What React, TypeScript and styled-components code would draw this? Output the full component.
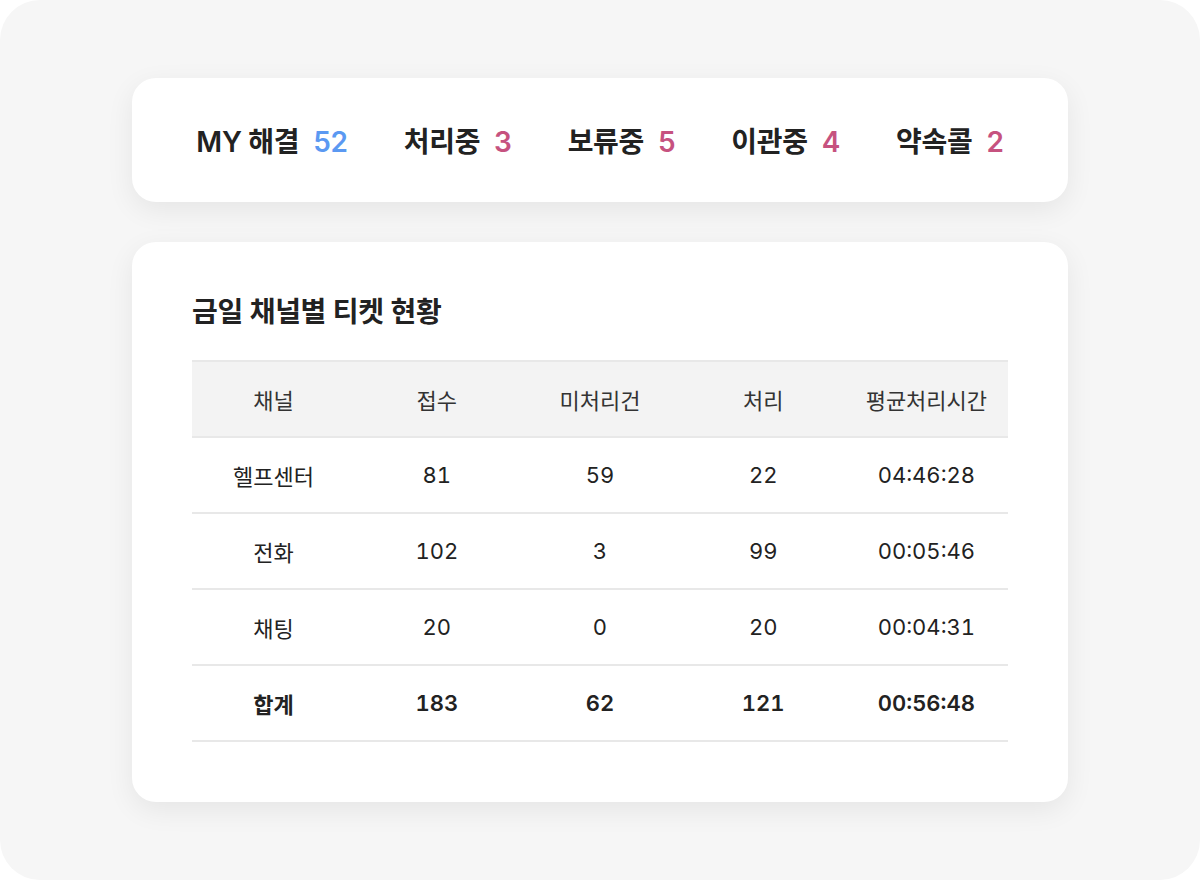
import React from 'react';
import styled, { createGlobalStyle } from 'styled-components';

const GlobalStyle = createGlobalStyle`
  html, body {
    margin: 0;
    padding: 0;
    background: #ffffff;
  }
  body {
    font-family: Inter, 'Noto Sans CJK KR', sans-serif;
    color: #222222;
  }
`;

const Screen = styled.div`
  width: 1200px;
  height: 880px;
  box-sizing: border-box;
  background: #f6f6f6;
  border-radius: 40px;
  padding-top: 78px;
  display: flex;
  flex-direction: column;
  align-items: center;
  gap: 40px;
`;

const Card = styled.section`
  width: 936px;
  box-sizing: border-box;
  background: #ffffff;
  border-radius: 24px;
  box-shadow: 0 8px 28px rgba(0, 0, 0, 0.07);
`;

const SummaryBar = styled(Card)`
  height: 124px;
  display: flex;
  align-items: center;
  justify-content: center;
  gap: 56px;
`;

const SummaryItem = styled.div`
  display: flex;
  align-items: baseline;
  gap: 14px;
  font-size: 28px;
  font-weight: 600;
  letter-spacing: -0.3px;
`;

const SummaryCount = styled.span<{ $tone: 'blue' | 'pink' }>`
  color: ${({ $tone }) => ($tone === 'blue' ? '#5b99f2' : '#c6527f')};
`;

const StatusPanel = styled(Card)`
  padding: 52px 60px 60px;
`;

const Title = styled.h2`
  margin: 0 0 30px;
  font-size: 28px;
  font-weight: 600;
  line-height: 36px;
  letter-spacing: -0.3px;
  color: #222222;
`;

const Table = styled.table`
  width: 100%;
  border-collapse: collapse;
  table-layout: fixed;
  font-variant-numeric: tabular-nums;
`;

const HeadCell = styled.th`
  height: 74px;
  padding: 0;
  background: #f3f3f3;
  border-top: 2px solid #e8e8e8;
  border-bottom: 2px solid #e8e8e8;
  font-size: 22px;
  font-weight: 400;
  color: #333333;
  text-align: center;
`;

const Cell = styled.td<{ $total?: boolean }>`
  height: 74px;
  padding: 0;
  border-bottom: 2px solid #e8e8e8;
  font-size: 22px;
  font-weight: ${({ $total }) => ($total ? 600 : 400)};
  color: #222222;
  text-align: center;
`;

const summary = [
  { label: 'MY 해결', count: 52, tone: 'blue' as const },
  { label: '처리중', count: 3, tone: 'pink' as const },
  { label: '보류중', count: 5, tone: 'pink' as const },
  { label: '이관중', count: 4, tone: 'pink' as const },
  { label: '약속콜', count: 2, tone: 'pink' as const },
];

const columns = ['채널', '접수', '미처리건', '처리', '평균처리시간'];

const rows = [
  ['헬프센터', '81', '59', '22', '04:46:28'],
  ['전화', '102', '3', '99', '00:05:46'],
  ['채팅', '20', '0', '20', '00:04:31'],
];

const total = ['합계', '183', '62', '121', '00:56:48'];

export default function App() {
  return (
    <>
      <GlobalStyle />
      <Screen>
        <SummaryBar>
          {summary.map((item) => (
            <SummaryItem key={item.label}>
              <span>{item.label}</span>
              <SummaryCount $tone={item.tone}>{item.count}</SummaryCount>
            </SummaryItem>
          ))}
        </SummaryBar>
        <StatusPanel>
          <Title>금일 채널별 티켓 현황</Title>
          <Table>
            <thead>
              <tr>
                {columns.map((col) => (
                  <HeadCell key={col}>{col}</HeadCell>
                ))}
              </tr>
            </thead>
            <tbody>
              {rows.map((row) => (
                <tr key={row[0]}>
                  {row.map((value, i) => (
                    <Cell key={i}>{value}</Cell>
                  ))}
                </tr>
              ))}
              <tr>
                {total.map((value, i) => (
                  <Cell key={i} $total>
                    {value}
                  </Cell>
                ))}
              </tr>
            </tbody>
          </Table>
        </StatusPanel>
      </Screen>
    </>
  );
}
